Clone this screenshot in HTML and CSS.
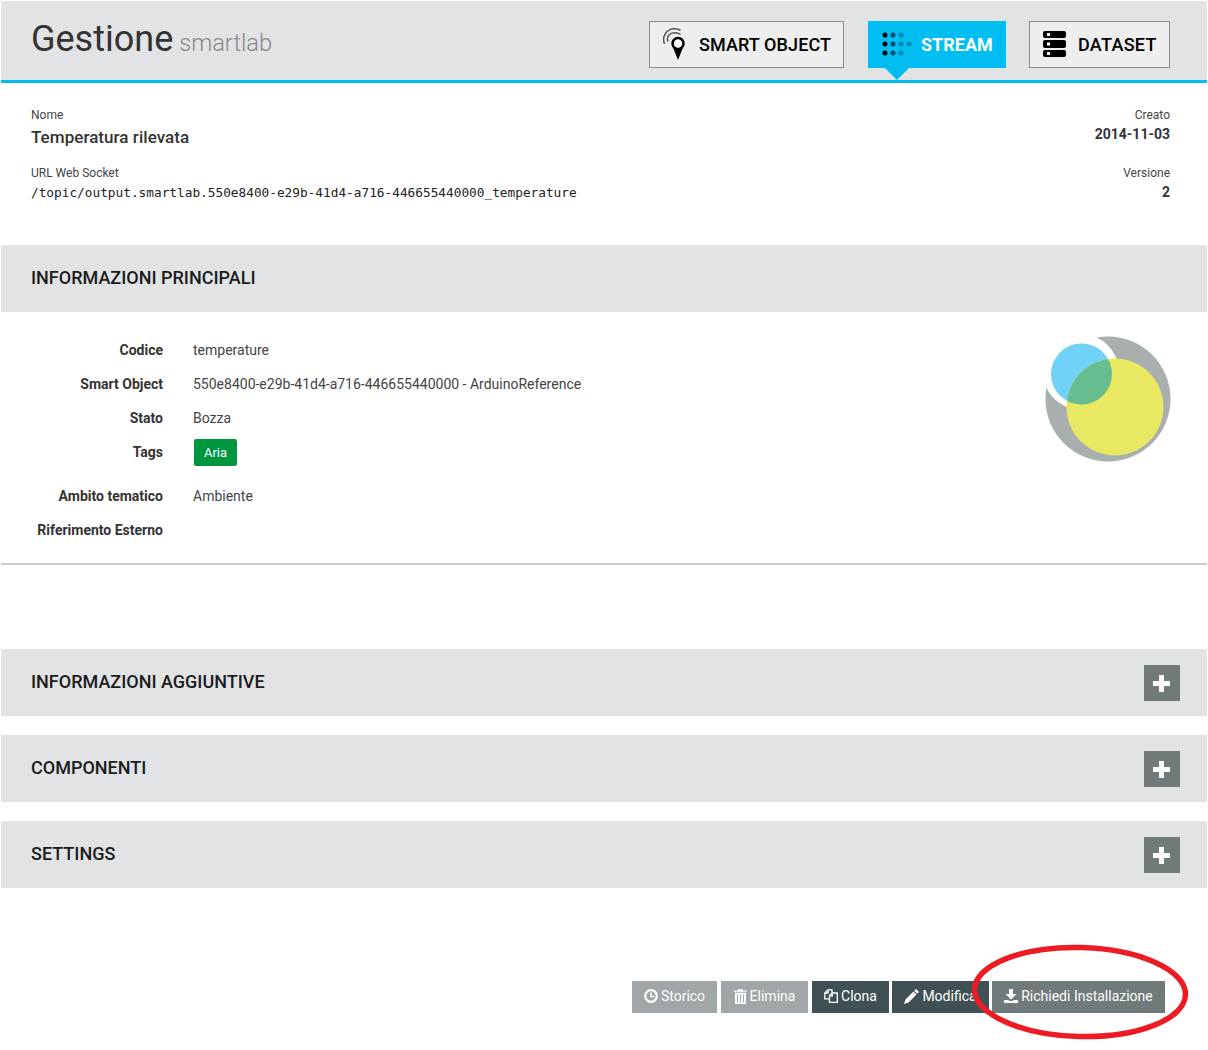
FILE: index.html
```html
<!DOCTYPE html>
<html lang="it">
<head>
<meta charset="utf-8">
<title>Gestione smartlab</title>
<link rel="stylesheet" href="styles.css">
</head>
<body>
<div class="page">
  <header class="top">
    <h1 class="title">Gestione <small>smartlab</small></h1>
    <nav class="tabs">
      <a class="tab tab-smart">
        <svg class="ico-smart" viewBox="0 0 26 34" width="26" height="34"><g fill="none" stroke="#555" stroke-width="1.500"><path d="M2.500 17C-.5 9 5 1.500 13 1.800c2 .1 4 .6 5.600 1.500"/><path d="M6 14.500C4 9.500 8 5.500 13 5.800c2 .1 4 .6 5.600 1.700"/></g><path d="M11 20.500 16 33l5-12.500z" fill="#000"/><circle cx="16" cy="16.500" r="5.500" fill="#fff" stroke="#000" stroke-width="2.500"/></svg>
        <span>SMART OBJECT</span>
      </a>
      <a class="tab tab-active">
        <svg viewBox="0 0 30 24" width="30" height="24"><g fill="#000"><circle cx="3" cy="3" r="2.500"/><circle cx="3" cy="12" r="2.500"/><circle cx="3" cy="21" r="2.500"/></g><g fill="#004f6a"><circle cx="11" cy="3" r="2.500"/><circle cx="11" cy="12" r="2.500"/><circle cx="11" cy="21" r="2.500"/></g><g fill="#0086ad"><circle cx="19" cy="3" r="2.500"/><circle cx="19" cy="12" r="2.500"/><circle cx="19" cy="21" r="2.500"/><circle cx="27" cy="12" r="2.500"/></g></svg>
        <span>STREAM</span>
      </a>
      <a class="tab tab-data">
        <svg viewBox="0 0 23 26" width="23" height="26"><g fill="#000"><rect y="0" width="23" height="7" rx="2"/><rect y="9" width="23" height="8" rx="2"/><rect y="19" width="23" height="7" rx="2"/></g><g fill="#fff"><rect x="4" y="2" width="3" height="3"/><rect x="4" y="11.500" width="3" height="3"/><rect x="4" y="21" width="3" height="3"/></g></svg>
        <span>DATASET</span>
      </a>
    </nav>
  </header>

  <section class="meta">
    <div class="meta-col">
      <div class="meta-label">Nome</div>
      <div class="meta-name">Temperatura rilevata</div>
      <div class="meta-label meta-gap">URL Web Socket</div>
      <div class="meta-url">/topic/output.smartlab.550e8400-e29b-41d4-a716-446655440000_temperature</div>
    </div>
    <div class="meta-col meta-right">
      <div class="meta-label">Creato</div>
      <div class="meta-val">2014-11-03</div>
      <div class="meta-label meta-gap2">Versione</div>
      <div class="meta-val meta-val2">2</div>
    </div>
  </section>

  <div class="bar"><h2>INFORMAZIONI PRINCIPALI</h2></div>

  <section class="main-info">
    <dl class="props">
      <dt>Codice</dt><dd>temperature</dd>
      <dt>Smart Object</dt><dd>550e8400-e29b-41d4-a716-446655440000 - ArduinoReference</dd>
      <dt>Stato</dt><dd>Bozza</dd>
      <dt>Tags</dt><dd class="tags"><span class="tag">Aria</span></dd>
      <dt>Ambito tematico</dt><dd>Ambiente</dd>
      <dt>Riferimento Esterno</dt><dd></dd>
    </dl>
    <svg class="logo" viewBox="0 0 126 126" width="126" height="126">
      <defs>
        <mask id="cut"><rect width="126" height="126" fill="#fff"/><circle cx="36" cy="36" r="38" fill="#000"/></mask>
        <clipPath id="blueclip"><circle cx="36.500" cy="38" r="30.500"/></clipPath>
      </defs>
      <circle cx="63" cy="63" r="62.500" fill="#a9afaf" mask="url(#cut)"/>
      <circle cx="36.500" cy="38" r="30.500" fill="#70d2f6"/>
      <circle cx="70" cy="71" r="48.500" fill="#e9e863"/>
      <circle cx="70" cy="71" r="48.500" fill="#66bd8f" clip-path="url(#blueclip)"/>
    </svg>
  </section>

  <div class="bar bar-first"><h2>INFORMAZIONI AGGIUNTIVE</h2><span class="plus"></span></div>
  <div class="bar bar-next"><h2>COMPONENTI</h2><span class="plus"></span></div>
  <div class="bar bar-next"><h2>SETTINGS</h2><span class="plus"></span></div>

  <div class="actions">
    <a class="btn btn-light">
      <svg viewBox="0 0 14 14" width="14" height="14"><circle cx="7" cy="7" r="5.800" fill="none" stroke="#fff" stroke-width="2.200"/><path d="M7 3.500V7.500H10.500" fill="none" stroke="#fff" stroke-width="1.600"/></svg>Storico</a>
    <a class="btn btn-light">
      <svg viewBox="0 0 13 15" width="13" height="15"><path fill="#fff" d="M4.500 0h4l.6 1.500H13v1.300H0V1.500h3.900zM1 3.800h11V15H1zm2 1.400v8.300h1V5.200zm3 0v8.300h1V5.200zm3 0v8.300h1V5.200z" fill-rule="evenodd"/></svg>Elimina</a>
    <a class="btn btn-dark">
      <svg viewBox="0 0 14 14" width="14" height="14"><g fill="none" stroke="#fff" stroke-width="1.300"><path d="M5.500 9.800H.8V4L4 .8H8V4"/><path d="M4 .8V4H.8"/><path d="M5.500 13.300V6.800L8.300 4h5v9.300z"/><path d="M8.300 4V6.800H5.500"/></g></svg>Clona</a>
    <a class="btn btn-dark btn-mod">
      <svg viewBox="0 0 15 15" width="15" height="15"><path fill="#fff" fill-rule="evenodd" d="M12 0 15 3 13.200 4.800 10.200 1.800zM9.500 2.500 12.500 5.500 4.500 13.500 0 15 1.500 10.500z"/></svg>Modifica</a>
    <a class="btn btn-mid">
      <svg viewBox="0 0 14 14" width="14" height="14"><path fill="#fff" d="M5 0h4v5h3.500L7 10.500 1.500 5H5zM0 11h3.500L7 12.300 10.500 11H14v3H0z"/></svg>Richiedi Installazione</a>
  </div>

  <svg class="annot" viewBox="0 0 220 98" width="220" height="98"><ellipse cx="110" cy="49" rx="105.500" ry="44.500" transform="rotate(1.500 110 49)" fill="none" stroke="#ed1c24" stroke-width="5.500"/></svg>
</div>
</body>
</html>
```
FILE: styles.css
```css
* { box-sizing: border-box; }
html, body { margin: 0; padding: 0; background: #fff; }
body { font-family: Roboto, "Liberation Sans", sans-serif; color: #333; font-size: 14px; }
.page { position: relative; width: 1208px; height: 1050px; padding: 1px 1px 0 1px; overflow: hidden; }

.top { height: 82px; background: #e2e3e5; border-bottom: 3px solid #00bdf2; padding: 20px 37px 0 30px; display: flex; justify-content: space-between; }
.title { margin: 0; font-size: 36px; font-weight: 400; line-height: 36px; color: #333; }
.title small { font-size: 23.700px; font-weight: 300; color: #888; margin-left: -3px; }
.tabs { display: flex; gap: 24px; height: 47px; }
.tab { position: relative; display: flex; align-items: center; height: 47px; border: 1px solid #8c8c8c; background: #eee; color: #000; font-size: 18px; font-weight: 500; white-space: nowrap; padding: 0 0 1px 13px; gap: 12px; }
.tab-smart { width: 195px; padding-left: 12px; gap: 11px; letter-spacing: .1px; }
.tab-active { width: 138px; background: #00bdf2; border-color: #00bdf2; color: #fff; font-weight: 700; padding-left: 13px; gap: 9px; }
.tab-data { width: 141px; margin-left: -1px; letter-spacing: .3px; }
.tab-active::after { content: ""; position: absolute; left: 16px; bottom: -13px; border-left: 12px solid transparent; border-right: 12px solid transparent; border-top: 12px solid #00bdf2; }

.meta { display: flex; justify-content: space-between; height: 162px; padding: 24px 37px 0 30px; }
.meta-right { text-align: right; }
.meta-label { font-size: 12px; line-height: 16px; color: #444; }
.meta-name { font-size: 17px; font-weight: 500; letter-spacing: .05px; line-height: 20px; margin-top: 4px; color: #333; }
.meta-val { font-size: 14px; font-weight: 700; line-height: 20px; margin-top: 1px; color: #333; }
.meta-gap { margin-top: 18px; }
.meta-gap2 { margin-top: 21px; }
.meta-val2 { margin-top: 1px; }
.meta-url { font-family: "DejaVu Sans Mono", monospace; font-size: 12.770px; line-height: 20px; margin-top: 2px; color: #222; }

.bar { height: 67px; background: #e2e3e5; padding: 0 27px 0 30px; display: flex; justify-content: space-between; align-items: center; }
.bar h2 { margin: 0; font-size: 18px; font-weight: 500; color: #1c1c1c; position: relative; top: -1px; }
.bar-first { margin-top: 84px; }
.bar-next { margin-top: 19px; }
.plus { position: relative; display: block; width: 36px; height: 36px; margin-top: 1px; background: #707a7a; }
.plus::before, .plus::after { content: ""; position: absolute; background: #fff; }
.plus::before { left: 9px; top: 16px; width: 17px; height: 5px; }
.plus::after { left: 15px; top: 10px; width: 5px; height: 17px; }

.main-info { position: relative; height: 253px; border-bottom: 2px solid #ccc; padding-top: 21px; }
.props { margin: 0; display: grid; grid-template-columns: 162px 1fr; grid-template-rows: 34px 34px 34px 44px 34px 34px; column-gap: 30px; align-items: start; }
.props dt { text-align: right; font-weight: 700; font-size: 14px; color: #333; line-height: 34px; }
.props dd { margin: 0; font-size: 14px; color: #444; line-height: 34px; }
.props .tags { padding-top: 4px; }
.tag { display: block; width: 43px; height: 27px; line-height: 27px; margin-left: 1px; background: #009640; color: #fff; text-align: center; font-weight: 400; font-size: 13px; border-radius: 2px; }
.logo { position: absolute; right: 36px; top: 24px; }

.actions { display: flex; margin: 93px 0 0 631px; height: 32px; }
.btn { display: flex; align-items: center; justify-content: center; gap: 3px; height: 32px; padding-bottom: 2px; color: #fff; font-size: 14px; margin-right: 4px; }
.btn svg { flex: none; }
.btn-light { background: #a1a6a8; }
.btn-dark { background: #3f5155; }
.btn-mid { background: #707a7a; margin-right: 0; }
.btn:nth-child(1) { width: 85px; }
.btn:nth-child(2) { width: 87px; }
.btn:nth-child(3) { width: 77px; margin-right: 3px; }
.btn:nth-child(4) { width: 97px; margin-right: 3px; }
.btn:nth-child(5) { width: 173px; }

.annot { position: absolute; left: 970px; top: 943px; }
```
